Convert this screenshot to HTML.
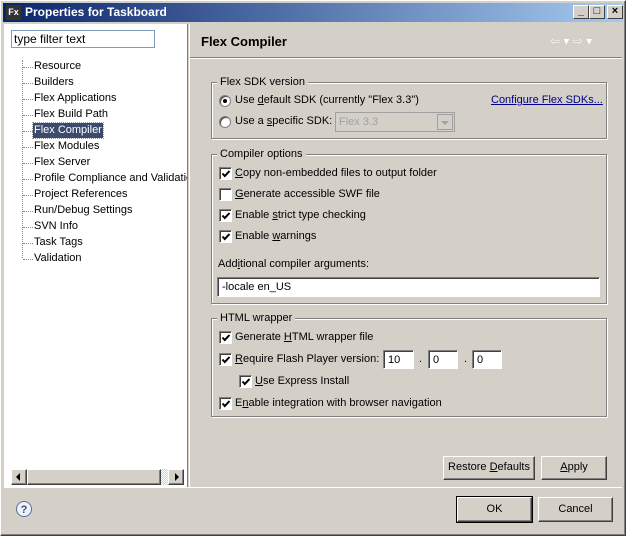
<!DOCTYPE html>
<html><head><meta charset="utf-8">
<style>
*{box-sizing:border-box;margin:0;padding:0}
body{width:626px;height:536px;overflow:hidden;background:#d4d0c8;font:11px "Liberation Sans",Tahoma,sans-serif;color:#000;position:relative}
.a{position:absolute}
.win{left:0;top:0;width:626px;height:536px;border:1px solid #fff;border-right-color:#404040;border-bottom-color:#404040;box-shadow:inset -1px -1px #808080}
.title{left:3px;top:3px;width:620px;height:19px;background:linear-gradient(90deg,#0a246a,#a6caf0);color:#fff;font-weight:bold;font-size:12px}
.tb{top:2px;width:16px;height:14px;background:#d4d0c8;border:1px solid;border-color:#fff #404040 #404040 #fff;color:#000;font-size:11px;line-height:11px;text-align:center;font-weight:bold}
.left{left:4px;top:24px;width:184px;height:463px;background:#fff;border-right:1px solid #808080}
.tree div{position:absolute;left:30px;height:15px;line-height:15px;white-space:nowrap}
.tree span.d{position:absolute;left:19px;width:10px;border-top:1px dotted #888}
.grp{border:1px solid #808080;box-shadow:1px 1px #fff, inset 1px 1px #fff}
.gl{background:#d4d0c8;padding:0 3px;top:-7px;left:5px;position:absolute}
.cb{width:13px;height:13px;background:#fff;border:1px solid;border-color:#808080 #fff #fff #808080;box-shadow:inset 1px 1px #404040}
.cb svg{position:absolute;left:1px;top:1px}
.rb{width:12px;height:12px;border-radius:50%;background:#fff;border:1px solid #808080;box-shadow:inset 1px 1px #404040}
.rb.c::after{content:"";position:absolute;left:3px;top:3px;width:4px;height:4px;border-radius:50%;background:#000}
.tx{white-space:nowrap}
.in{background:#fff;border:1px solid;border-color:#808080 #fff #fff #808080;box-shadow:inset 1px 1px #404040;padding:3px 4px;white-space:nowrap}
.btn{border:1px solid;border-color:#fff #404040 #404040 #fff;box-shadow:inset -1px -1px #808080;text-align:center;line-height:21px}
u{text-decoration:underline}
</style></head><body>
<div class="a win"></div>
<div class="a title">
 <div class="a" style="left:3px;top:2px;width:15px;height:15px;background:#333;color:#fff;font-size:9px;line-height:15px;text-align:center">Fx</div>
 <div class="a" style="left:22px;top:2px">Properties for Taskboard</div>
 <div class="a tb" style="left:570px">_</div>
 <div class="a tb" style="left:586px">□</div>
 <div class="a tb" style="left:604px">×</div>
</div>
<div class="a left">
 <div class="a" style="left:7px;top:6px;width:144px;height:18px;border:1px solid #7f9db9;padding:1px 2px;font-size:12px">type filter text</div>
 <div class="a" style="left:18px;top:36px;height:198px;border-left:1px dotted #888"></div>
 <div class="tree">
  <span class="d" style="top:43px"></span><div style="top:35px">Resource</div>
  <span class="d" style="top:59px"></span><div style="top:51px">Builders</div>
  <span class="d" style="top:75px"></span><div style="top:67px">Flex Applications</div>
  <span class="d" style="top:91px"></span><div style="top:83px">Flex Build Path</div>
  <span class="d" style="top:107px"></span><div style="top:99px;background:#3c4b6d;color:#fff;padding:0 1px;left:29px;outline:1px dotted #999">Flex Compiler</div>
  <span class="d" style="top:123px"></span><div style="top:115px">Flex Modules</div>
  <span class="d" style="top:139px"></span><div style="top:131px">Flex Server</div>
  <span class="d" style="top:155px"></span><div style="top:147px;width:153px;overflow:hidden">Profile Compliance and Validation</div>
  <span class="d" style="top:171px"></span><div style="top:163px">Project References</div>
  <span class="d" style="top:187px"></span><div style="top:179px">Run/Debug Settings</div>
  <span class="d" style="top:203px"></span><div style="top:195px">SVN Info</div>
  <span class="d" style="top:219px"></span><div style="top:211px">Task Tags</div>
  <span class="d" style="top:235px"></span><div style="top:227px">Validation</div>
 </div>
 <div class="a" style="left:7px;top:445px;width:173px;height:16px;background:repeating-conic-gradient(#d4d0c8 0 25%,#fff 0 50%) 0 0/2px 2px"></div>
 <div class="a btn" style="left:7px;top:445px;width:16px;height:16px;background:#d4d0c8"><div class="a" style="left:4px;top:3px;border:4px solid transparent;border-right-color:#000;border-left:0"></div></div>
 <div class="a btn" style="left:23px;top:445px;width:134px;height:16px;background:#d4d0c8"></div>
 <div class="a btn" style="left:164px;top:445px;width:16px;height:16px;background:#d4d0c8"><div class="a" style="left:6px;top:3px;border:4px solid transparent;border-left-color:#000;border-right:0"></div></div>
</div>
<div class="a" style="left:189px;top:24px;width:1px;height:463px;background:#fff"></div>
<div class="a" style="left:201px;top:34px;font-size:13px;font-weight:bold">Flex Compiler</div>
<div class="a" style="left:550px;top:34px;color:#fff;font-size:12px;text-shadow:0 0 1px #aaa">⇦ ▾ ⇨ ▾</div>
<div class="a" style="left:190px;top:57px;width:432px;height:2px;background:#808080;border-bottom:1px solid #fff"></div>

<div class="a grp" style="left:211px;top:82px;width:396px;height:57px">
 <span class="gl">Flex SDK version</span>
</div>
<div class="a rb c" style="left:219px;top:95px"></div>
<div class="a tx" style="left:235px;top:94px">Use <u>d</u>efault SDK (currently "Flex 3.3")</div>
<div class="a tx" style="left:491px;top:94px;color:#00008b;text-decoration:underline">Configure Flex SDKs...</div>
<div class="a rb" style="left:219px;top:116px"></div>
<div class="a tx" style="left:235px;top:115px">Use a <u>s</u>pecific SDK:</div>
<div class="a" style="left:335px;top:112px;width:120px;height:20px;border:1px solid #a0a0a0;background:#d4d0c8;color:#a0a0a0;padding:3px 3px">Flex 3.3
 <div class="a" style="right:1px;top:1px;width:16px;height:16px;border:1px solid #a0a0a0;background:#d4d0c8"><div class="a" style="left:3px;top:6px;border:4px solid transparent;border-top-color:#a0a0a0;border-bottom:0"></div></div>
</div>

<div class="a grp" style="left:211px;top:154px;width:396px;height:150px">
 <span class="gl">Compiler options</span>
</div>
<div class="a cb" style="left:219px;top:167px"><svg width="10" height="10"><path d="M1.5 4.5 L3.8 7 L8.5 2" stroke="#000" stroke-width="2" fill="none"/></svg></div><div class="a tx" style="left:235px;top:167px"><u>C</u>opy non-embedded files to output folder</div>
<div class="a cb" style="left:219px;top:188px"></div><div class="a tx" style="left:235px;top:188px"><u>G</u>enerate accessible SWF file</div>
<div class="a cb" style="left:219px;top:209px"><svg width="10" height="10"><path d="M1.5 4.5 L3.8 7 L8.5 2" stroke="#000" stroke-width="2" fill="none"/></svg></div><div class="a tx" style="left:235px;top:209px">Enable <u>s</u>trict type checking</div>
<div class="a cb" style="left:219px;top:230px"><svg width="10" height="10"><path d="M1.5 4.5 L3.8 7 L8.5 2" stroke="#000" stroke-width="2" fill="none"/></svg></div><div class="a tx" style="left:235px;top:230px">Enable <u>w</u>arnings</div>
<div class="a tx" style="left:218px;top:258px">Add<u>i</u>tional compiler arguments:</div>
<div class="a in" style="left:217px;top:277px;width:383px;height:20px">-locale en_US</div>

<div class="a grp" style="left:211px;top:318px;width:396px;height:99px">
 <span class="gl">HTML wrapper</span>
</div>
<div class="a cb" style="left:219px;top:331px"><svg width="10" height="10"><path d="M1.5 4.5 L3.8 7 L8.5 2" stroke="#000" stroke-width="2" fill="none"/></svg></div><div class="a tx" style="left:235px;top:331px">Generate <u>H</u>TML wrapper file</div>
<div class="a cb" style="left:219px;top:353px"><svg width="10" height="10"><path d="M1.5 4.5 L3.8 7 L8.5 2" stroke="#000" stroke-width="2" fill="none"/></svg></div><div class="a tx" style="left:235px;top:353px"><u>R</u>equire Flash Player version:</div>
<div class="a in" style="left:383px;top:350px;width:31px;height:19px">10</div>
<div class="a tx" style="left:419px;top:353px">.</div>
<div class="a in" style="left:428px;top:350px;width:30px;height:19px">0</div>
<div class="a tx" style="left:464px;top:353px">.</div>
<div class="a in" style="left:472px;top:350px;width:30px;height:19px">0</div>
<div class="a cb" style="left:239px;top:375px"><svg width="10" height="10"><path d="M1.5 4.5 L3.8 7 L8.5 2" stroke="#000" stroke-width="2" fill="none"/></svg></div><div class="a tx" style="left:255px;top:375px"><u>U</u>se Express Install</div>
<div class="a cb" style="left:219px;top:397px"><svg width="10" height="10"><path d="M1.5 4.5 L3.8 7 L8.5 2" stroke="#000" stroke-width="2" fill="none"/></svg></div><div class="a tx" style="left:235px;top:397px">E<u>n</u>able integration with browser navigation</div>

<div class="a btn" style="left:443px;top:456px;width:92px;height:24px">Restore <u>D</u>efaults</div>
<div class="a btn" style="left:541px;top:456px;width:66px;height:24px"><u>A</u>pply</div>

<div class="a" style="left:4px;top:487px;width:618px;height:1px;background:#808080;border-bottom:1px solid #fff"></div>
<svg class="a" style="left:15px;top:500px" width="18" height="18"><circle cx="9" cy="9" r="7.5" fill="#eef2fa" stroke="#5a6e9c"/><text x="9" y="13" font-size="11" font-weight="bold" text-anchor="middle" fill="#3a4e7c" font-family="Liberation Sans">?</text></svg>
<div class="a btn" style="left:457px;top:497px;width:75px;height:25px;outline:1px solid #000;line-height:23px">OK</div>
<div class="a btn" style="left:538px;top:497px;width:75px;height:25px;line-height:23px">Cancel</div>
</body></html>
